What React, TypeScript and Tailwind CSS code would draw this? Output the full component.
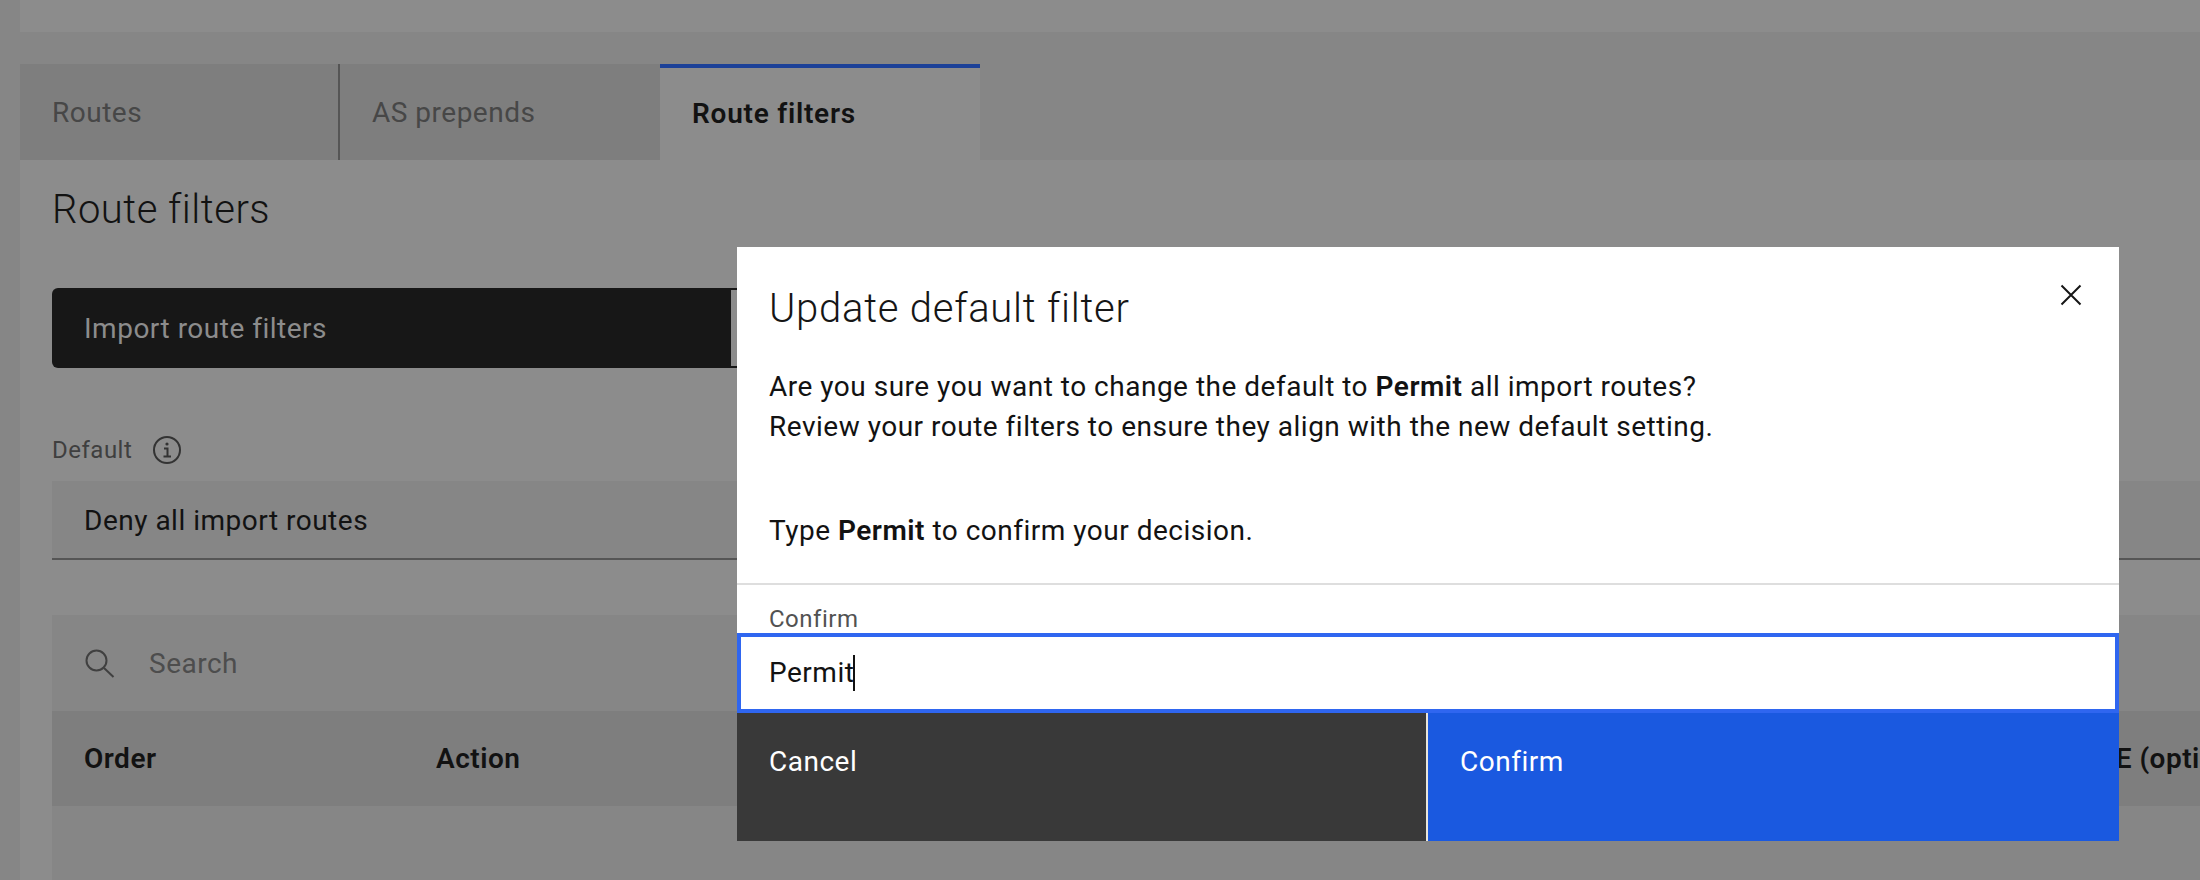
function CloseIcon() {
  return (
    <svg width="32" height="32" viewBox="0 0 32 32" fill="none" stroke="#161616" strokeWidth="2">
      <path d="M6.5 6.5 L25.5 25.5 M25.5 6.5 L6.5 25.5" />
    </svg>
  );
}

function SearchIcon() {
  return (
    <svg width="32" height="32" viewBox="0 0 32 32" fill="none" stroke="#404040" strokeWidth="2">
      <circle cx="12.5" cy="13.5" r="10" />
      <path d="M20 21 L29.5 30" />
    </svg>
  );
}

function InfoIcon() {
  return (
    <svg width="32" height="32" viewBox="0 0 32 32" fill="none" stroke="#333" strokeWidth="2">
      <circle cx="16" cy="16" r="13" />
      <circle cx="16" cy="10" r="1.6" fill="#333" stroke="none" />
      <path d="M13 14.5 H16.5 V22.5 M12.5 22.5 H20" />
    </svg>
  );
}

export default function App() {
  return (
    <div className="relative h-[880px] w-[2200px] overflow-hidden bg-[#868686] font-['Roboto',_sans-serif] text-[28px] tracking-[0.5px] text-[#121212]">
      {/* page behind the dialog */}
      <div className="ml-5 h-8 bg-[#8c8c8c]" />
      <div className="ml-5 mt-8 flex h-24">
        <div className="flex w-[320px] items-center border-r-2 border-[#555] bg-[#7e7e7e] px-8 pt-[2px] text-[#474747]">Routes</div>
        <div className="flex w-[320px] items-center bg-[#7e7e7e] px-8 pt-[2px] text-[#474747]">AS prepends</div>
        <div className="flex w-[320px] items-center border-t-4 border-[#1c4198] bg-[#8c8c8c] px-8 font-semibold tracking-[0.75px] text-[#121212]">Route filters</div>
      </div>
      <div className="ml-5 h-[720px] bg-[#8c8c8c] pl-8">
        <h2 className="pt-[26px] text-[40px] leading-[48px] font-light">Route filters</h2>
        <div className="mt-[54px] flex h-20 w-[685px] items-center rounded-l-md bg-[#171717] pl-8 pt-[2px] text-[#8c8c8c]">
          <span className="flex-1">Import route filters</span>
          <span className="mb-[2px] h-[76px] w-[6px] bg-[#8c8c8c]" />
        </div>
        <div className="mt-[65px] flex h-8 items-center gap-[19px] pt-[1px] text-[24px] text-[#3f3f3f]">
          Default
          <InfoIcon />
        </div>
        <div className="mt-4 flex h-[79px] items-center border-b-2 border-[#555] bg-[#868686] pl-8 pt-[2px]">Deny all import routes</div>
        <div className="mt-[55px] flex h-24 items-center gap-[33px] bg-[#868686] pl-8 text-[#4d4d4d]">
          <SearchIcon />
          <span className="pt-[1px]">Search</span>
        </div>
        <div className="flex h-[95px] items-center overflow-hidden whitespace-nowrap bg-[#7e7e7e] pl-8 font-semibold">
          <span className="w-[352px] shrink-0">Order</span>
          <span className="w-[1664px] shrink-0">Action</span>
          <span className="shrink-0">LE (optional)</span>
        </div>
        <div className="h-20 bg-[#868686]" />
      </div>

      {/* confirm dialog */}
      <div className="absolute left-[737px] top-[247px] flex h-[594px] w-[1382px] flex-col bg-white">
        <button className="absolute right-8 top-8">
          <CloseIcon />
        </button>
        <h3 className="pl-8 pt-[38px] text-[40px] leading-[48px] font-light tracking-[0.75px] text-[#161616]">Update default filter</h3>
        <p className="mt-[34px] pl-8 leading-10">
          Are you sure you want to change the default to <b className="font-semibold">Permit</b> all import routes?
          <br />
          Review your route filters to ensure they align with the new default setting.
        </p>
        <p className="mt-[64px] pl-8 leading-10">
          Type <b className="font-semibold">Permit</b> to confirm your decision.
        </p>
        <div className="mt-[32px] h-[2px] shrink-0 bg-[#dedede]" />
        <label className="mt-[20px] pl-8 text-[24px] leading-[28px] text-[#525252]">Confirm</label>
        <div className="flex h-20 shrink-0 items-center border-4 border-[#2f66f0] bg-white pl-7">
          Permit<span className="-ml-px h-9 w-[2px] bg-[#121212]" />
        </div>
        <div className="flex h-[128px] shrink-0">
          <div className="w-[689px] bg-[#393939] pl-8 pt-[28px] text-white">Cancel</div>
          <div className="w-[2px] bg-[#e8e4da]" />
          <div className="flex-1 bg-[#1a59e0] pl-8 pt-[28px] text-white">Confirm</div>
        </div>
      </div>
    </div>
  );
}
